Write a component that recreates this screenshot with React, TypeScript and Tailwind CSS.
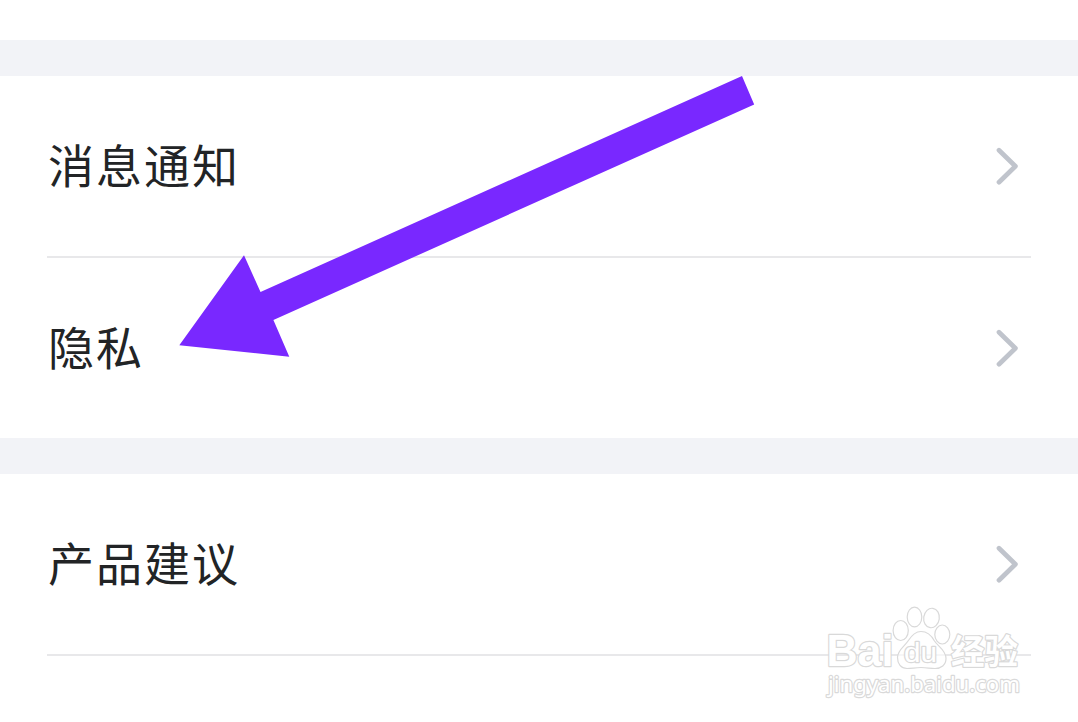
interface SettingsItem {
  id: string;
  label: string;
}

const ACCOUNT_ITEMS: SettingsItem[] = [
  { id: "notifications", label: "消息通知" },
  { id: "privacy", label: "隐私" },
];

const SUPPORT_ITEMS: SettingsItem[] = [{ id: "feedback", label: "产品建议" }];

function Chevron() {
  return (
    <svg className="h-12 w-8 flex-shrink-0" viewBox="0 0 32 48" fill="none">
      <path
        d="M8 8.2L24.4 24.3L8 40.2"
        stroke="#c0c4cc"
        strokeWidth={4.7}
        strokeLinecap="round"
        strokeLinejoin="round"
      />
    </svg>
  );
}

function SettingsRow({ label }: { label: string }) {
  return (
    <button className="flex h-[180px] w-full items-center justify-between pl-px pr-2 text-left">
      <span className="pb-1.5 text-[46px] leading-none tracking-[2px] text-[#222426]">{label}</span>
      <Chevron />
    </button>
  );
}

function Divider() {
  return <div className="h-0.5 bg-[#e8e8ea]" />;
}

function SectionGap() {
  return <div className="h-9 bg-[#f2f3f7]" />;
}

// Arrow pointing at the privacy row
function PointerArrow() {
  return (
    <svg
      className="pointer-events-none absolute left-[170px] top-[70px] h-[300px] w-[600px]"
      viewBox="170 70 600 300"
    >
      <path d="M742 76L754.2 104.5L273.4 320L289.3 356.7L179.3 345.3L244 255.2L260.5 292Z" fill="#7928ff" />
    </svg>
  );
}

function Watermark() {
  return (
    <svg
      className="pointer-events-none absolute left-[820px] top-[600px] h-[110px] w-[210px]"
      viewBox="820 600 210 110"
    >
      <g
        fill="#ffffff"
        stroke="#d9d9d9"
        strokeWidth={1.2}
        strokeLinejoin="round"
      >
        <g fillOpacity={0.6}>
          <ellipse cx="900.7" cy="630.5" rx="7.6" ry="10" />
          <ellipse cx="914.5" cy="617" rx="7.3" ry="9.9" />
          <ellipse cx="931.5" cy="618" rx="7.8" ry="9.8" transform="rotate(8 931.5 618)" />
          <ellipse cx="942.3" cy="634.5" rx="7.5" ry="9.5" />
          <path d="M921 631.5C927 631.5 931.5 635.5 934.5 641C938 646.5 946 650 946 658.5C946 665 941 668.5 935 668.5C930 668.5 927 667.5 921 667.5C915 667.5 912 668.5 907 668.5C901 668.5 897.5 664 897.5 657.5C897.5 650 904.5 646.5 908 641C911.5 635.5 915 631.5 921 631.5Z" />
        </g>
        <g className="[paint-order:stroke]" strokeWidth={2.4}>
          <text
            x="826.5"
            y="666"
            textLength="67"
            lengthAdjust="spacingAndGlyphs"
            className="font-['Liberation_Sans',sans-serif] text-[44px] font-bold"
          >
            Bai
          </text>
          <text
            x="904"
            y="662"
            textLength="33"
            lengthAdjust="spacingAndGlyphs"
            className="font-['Liberation_Sans',sans-serif] text-[27px]"
          >
            du
          </text>
          <text
            x="951"
            y="664"
            textLength="67"
            lengthAdjust="spacingAndGlyphs"
            className="font-['Noto_Sans_CJK_SC',sans-serif] text-[34px] font-bold"
          >
            经验
          </text>
          <text
            x="828"
            y="692"
            textLength="192"
            lengthAdjust="spacingAndGlyphs"
            className="font-['Noto_Sans',sans-serif] text-[22px] font-normal"
          >
            jingyan.baidu.com
          </text>
        </g>
      </g>
    </svg>
  );
}

export default function App() {
  return (
    <div className="relative h-[722px] w-full overflow-hidden bg-white pt-10 font-['Noto_Sans_CJK_SC',sans-serif]">
      <SectionGap />
      <section className="px-[47px]">
        {ACCOUNT_ITEMS.map((item, i) => (
          <div key={item.id}>
            {i > 0 && <Divider />}
            <SettingsRow label={item.label} />
          </div>
        ))}
      </section>

      <SectionGap />
      <section className="px-[47px]">
        {SUPPORT_ITEMS.map((item) => (
          <div key={item.id}>
            <SettingsRow label={item.label} />
            <Divider />
          </div>
        ))}
      </section>

      <PointerArrow />
      <Watermark />
    </div>
  );
}
